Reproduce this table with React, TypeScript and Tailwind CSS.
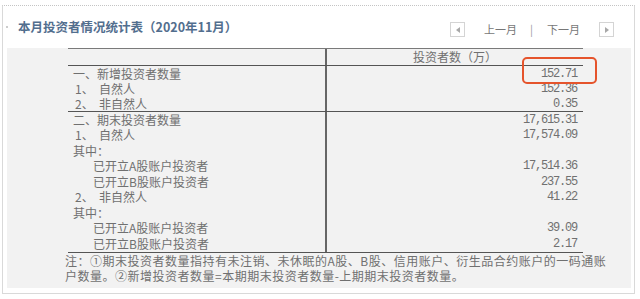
const cjk = "font-['Noto_Sans_CJK_SC','Noto_Sans',sans-serif]";
const num = "font-['Liberation_Mono','DejaVu_Sans_Mono',monospace] tracking-[-1.2px]";

type Row = { label: string; value?: string; indent?: "none" | "num" | "sub"; prefix?: string };

const newRows: Row[] = [
  { label: "一、新增投资者数量", value: "152.71" },
  { prefix: "1、", label: "自然人", value: "152.36", indent: "num" },
  { prefix: "2、", label: "非自然人", value: "0.35", indent: "num" },
];

const endRows: Row[] = [
  { label: "二、期末投资者数量", value: "17,615.31" },
  { prefix: "1、", label: "自然人", value: "17,574.09", indent: "num" },
  { label: "其中：" },
  { label: "已开立A股账户投资者", value: "17,514.36", indent: "sub" },
  { label: "已开立B股账户投资者", value: "237.55", indent: "sub" },
  { prefix: "2、", label: "非自然人", value: "41.22", indent: "num" },
  { label: "其中：" },
  { label: "已开立A股账户投资者", value: "39.09", indent: "sub" },
  { label: "已开立B股账户投资者", value: "2.17", indent: "sub" },
];

function ArrowBox({ dir }: { dir: "left" | "right" }) {
  return (
    <div className="flex h-[15px] w-[15px] items-center justify-center border border-[#d4d4d4] bg-white">
      <svg width="4" height="6" viewBox="0 0 4 6">
        {dir === "left" ? (
          <polygon points="4,0 0,3 4,6" fill="#a8a8a8" />
        ) : (
          <polygon points="0,0 4,3 0,6" fill="#a8a8a8" />
        )}
      </svg>
    </div>
  );
}

function TableRow({ row, h }: { row: Row; h: string }) {
  return (
    <div className={`grid grid-cols-[259px_256px] leading-[14px] ${h}`}>
      <div className="flex items-center overflow-hidden border-r-2 border-[#666] pl-[5px]">
        {row.indent === "sub" && <span className="w-[20px] shrink-0" />}
        {row.prefix && <span className="w-[26px] shrink-0 pl-[2px]">{row.prefix}</span>}
        <span>{row.label}</span>
      </div>
      <div className={`flex items-center justify-end pr-[6px] ${num}`}>{row.value}</div>
    </div>
  );
}

export default function App() {
  return (
    <div className={`relative h-[299px] w-[640px] overflow-hidden bg-white text-[12px] text-[#707070] ${cjk}`}>
      <div className="ml-[2px] mt-[5px] flex h-[289px] w-[633px] flex-col border border-[#d9d9d9] [border-top-style:dotted] [border-top-color:#c4c4c4]">
        {/* title bar */}
        <div className="flex h-[42px] items-center justify-between pl-[3px] pr-[20px]">
          <div className="flex items-center">
            <span className="h-[2px] w-[2px] rounded-full bg-[#bbb]" />
            <span className="ml-[10px] text-[12.5px] font-bold text-[#526e8e]">本月投资者情况统计表（2020年11月）</span>
          </div>
          <div className="mt-[5px] flex items-center text-[11px] text-[#777]">
            <ArrowBox dir="left" />
            <span className="ml-[19px]">上一月</span>
            <span className="ml-[13px] text-[#999]">|</span>
            <span className="ml-[14px]">下一月</span>
            <span className="ml-[19px]">
              <ArrowBox dir="right" />
            </span>
          </div>
        </div>

        {/* statistics table */}
        <div className="mb-[5px] ml-[4px] mr-[3px] flex-1 bg-[#f2f2f2] pl-[61px]">
          <div className="w-[515px] border-t border-[#7a7a7a]">
            <div className="grid h-[17px] grid-cols-[259px_256px] border-b-[1.5px] border-[#555] leading-[14px]">
              <div className="border-r-2 border-[#666]" />
              <div className="flex items-center justify-center">投资者数（万）</div>
            </div>
            <div className="border-b-[1.5px] border-[#555]">
              {newRows.map((r, i) => (
                <TableRow key={i} row={r} h="h-[15px]" />
              ))}
            </div>
            <div className="border-b-[1.5px] border-[#555]">
              {endRows.map((r, i) => (
                <TableRow key={i} row={r} h="h-[15.5px]" />
              ))}
            </div>
          </div>
          <div className="-ml-[3px] w-[545px] leading-[15px] tracking-[0.5px]">
            注：①期末投资者数量指持有未注销、未休眠的A股、B股、信用账户、衍生品合约账户的一码通账
            <br />
            户数量。②新增投资者数量=本期期末投资者数量-上期期末投资者数量。
          </div>
        </div>
      </div>

      {/* highlight around the monthly figure */}
      <div className="absolute left-[522px] top-[57px] h-[27px] w-[75px] rounded-[5px] border-[2.5px] border-[#e5542c]" />
    </div>
  );
}
